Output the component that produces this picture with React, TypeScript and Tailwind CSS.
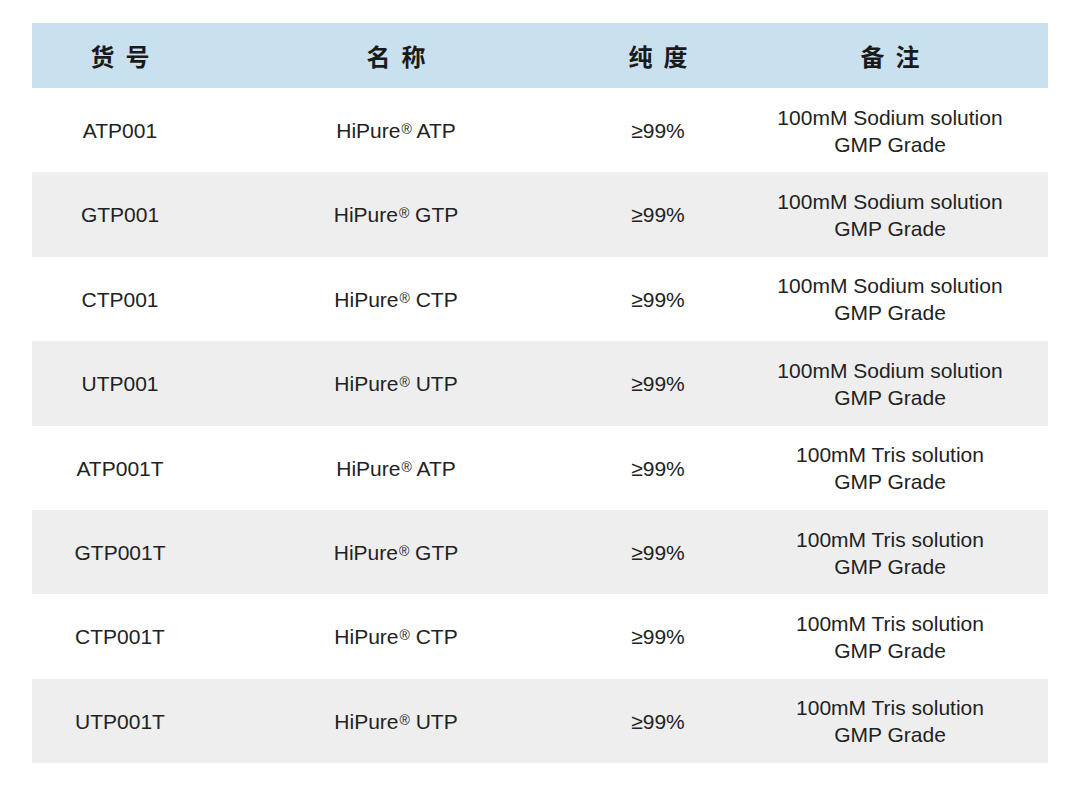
type Product = {
  readonly code: string;
  readonly name: string;
  readonly purity: string;
  readonly note: string;
};

const products: Product[] = [
  { code: "ATP001", name: "ATP", purity: "≥99%", note: "100mM Sodium solution" },
  { code: "GTP001", name: "GTP", purity: "≥99%", note: "100mM Sodium solution" },
  { code: "CTP001", name: "CTP", purity: "≥99%", note: "100mM Sodium solution" },
  { code: "UTP001", name: "UTP", purity: "≥99%", note: "100mM Sodium solution" },
  { code: "ATP001T", name: "ATP", purity: "≥99%", note: "100mM Tris solution" },
  { code: "GTP001T", name: "GTP", purity: "≥99%", note: "100mM Tris solution" },
  { code: "CTP001T", name: "CTP", purity: "≥99%", note: "100mM Tris solution" },
  { code: "UTP001T", name: "UTP", purity: "≥99%", note: "100mM Tris solution" },
];

const headers = ["货号", "名称", "纯度", "备注"];

const cols = "grid grid-cols-[176px_376px_148px_1fr]";

export default function App() {
  return (
    <div className="w-[1080px] h-[791px] bg-white pt-[23px] pl-[32px] font-['Liberation_Sans','Noto_Sans_CJK_SC',sans-serif] text-[#222]">
      <div className="w-[1016px]">
        <div className={`${cols} h-[65px] bg-[#c9e0ee] items-center`}>
          {headers.map((h) => (
            <div
              key={h}
              className="text-center text-[24px] font-bold tracking-[0.45em] pl-[0.45em] font-['Noto_Sans_CJK_SC',sans-serif] text-[#1a1a1a]"
            >
              {h}
            </div>
          ))}
        </div>
        {products.map((p, i) => (
          <Row key={p.code} product={p} shaded={i % 2 === 1} />
        ))}
      </div>
    </div>
  );
}

type RowProps = {
  readonly product: Product;
  readonly shaded: boolean;
};

const Row = ({ product, shaded }: RowProps) => (
  <div
    className={`${cols} h-[84.4px] items-center text-[21px] text-center ${
      shaded ? "bg-[#eeeeee]" : "bg-white"
    }`}
  >
    <span className="mt-[1px]">{product.code}</span>
    <span className="mt-[1px]">
      HiPure<sup className="text-[14px] relative -top-[4px] ml-[1px]">®</sup>{" "}
      {product.name}
    </span>
    <span className="mt-[1px]">{product.purity}</span>
    <span className="leading-[27px] mt-[1px]">
      {product.note}
      <br />
      GMP Grade
    </span>
  </div>
);
